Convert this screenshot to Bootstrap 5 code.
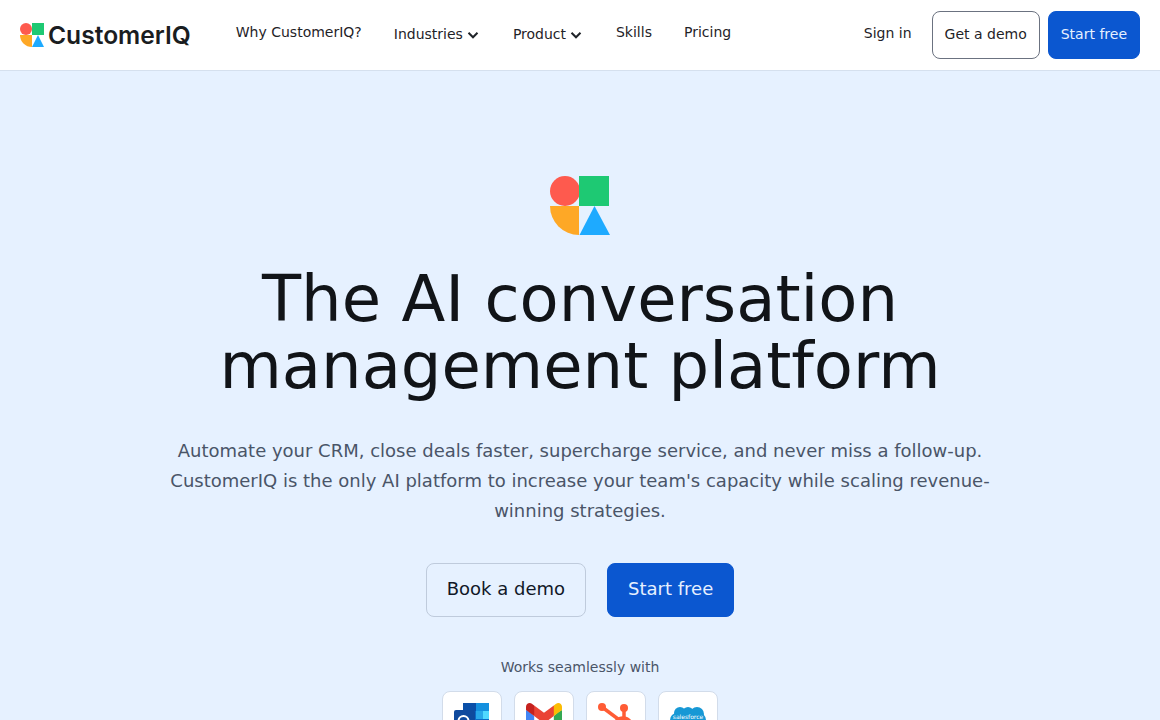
<!DOCTYPE html>
<html lang="en">
  <head>
    <meta charset="utf-8">
    <title>CustomerIQ</title>
    <link href="https://cdn.jsdelivr.net/npm/bootstrap@5.3.3/dist/css/bootstrap.min.css" rel="stylesheet">
    <style>
      html, body { height: 720px; overflow: hidden; }
      body { font-family: "DejaVu Sans", sans-serif; background: #e6f1ff; color: #111827; }
      .top-bar { height: 71px; background: #fff; border-bottom: 1px solid #d5e0ee; padding: 0 20px; }
      .brand-name { font-family: "Inter", sans-serif; font-weight: 600; font-size: 24.600px; color: #1a1d21; line-height: 1; }
      .main-links { margin-left: 29px; }
      .main-links a { display: block; padding: 0 16px; font-size: 14px; color: #1f2328; text-decoration: none; white-space: nowrap; margin-top: -5px; }
      .main-links a.has-menu { margin-top: -1px; }
      .main-links svg { margin-right: 1.500px; vertical-align: -2px; }
      .sign-link { font-size: 14px; color: #1f2328; text-decoration: none; margin-right: 12px; margin-top: -4px; }
      .nav-btn { font-size: 14px; height: 48px; border-radius: 8px; padding: 0 12px 2px; display: flex; align-items: center; }
      .btn-demo { background: #fff; color: #1f2328; border: 1px solid #6b7280; }
      .btn-free, .btn-free:hover { background: #0b57d0; color: #e6f0ff; border: 1px solid #0b57d0; }
      .hero { padding-top: 105px; }
      .hero h1 { font-size: 64px; font-weight: 400; line-height: 67px; color: #111418; margin: 30px 0 0; }
      .hero-copy { width: 830px; font-size: 18px; line-height: 30px; color: #4a5568; margin: 36px 0 0; }
      .hero-actions { gap: 21px; margin-top: 37px; }
      .hero-btn { font-size: 18px; height: 54px; border-radius: 8px; padding: 0 20px 3px; display: flex; align-items: center; }
      .btn-book { color: #111827; border: 1px solid #bfcbdc; background: transparent; }
      .works-label { font-size: 14px; color: #4a5568; margin: 40px 0 14px; line-height: 20px; }
      .tile-row { gap: 12px; }
      .logo-tile { width: 60px; height: 60px; background: #fff; border: 1px solid #d2dcea; border-radius: 8px; display: flex; align-items: flex-start; justify-content: center; padding-top: 11px; }
      .cloud-label { font-family: "DejaVu Sans", sans-serif; font-size: 6px; fill: #fff; }
    </style>
  </head>
  <body>
    <nav class="top-bar d-flex align-items-center">
      <a href="#" class="d-flex align-items-center gap-1 text-decoration-none">
        <svg width="24" height="24" viewBox="0 0 60 60"><circle cx="15" cy="15" r="15" fill="#fe5a4e"/><rect x="30" y="0" width="30" height="30" fill="#1ec973"/><path d="M0 30h30v30A30 30 0 0 1 0 30z" fill="#fea826"/><path d="M45 30 60 60H30z" fill="#1eaaff"/></svg>
        <span class="brand-name">CustomerIQ</span>
      </a>
      <div class="main-links d-flex align-items-center">
        <a href="#">Why CustomerIQ?</a>
        <a href="#" class="has-menu">Industries
          <svg width="12" height="12" viewBox="0 0 12 12"><path d="M1.500 3.800 6 8.300l4.500-4.500" fill="none" stroke="#1f2328" stroke-width="2"/></svg></a>
        <a href="#" class="has-menu">Product
          <svg width="12" height="12" viewBox="0 0 12 12"><path d="M1.500 3.800 6 8.300l4.500-4.500" fill="none" stroke="#1f2328" stroke-width="2"/></svg></a>
        <a href="#">Skills</a>
        <a href="#">Pricing</a>
      </div>
      <div class="ms-auto d-flex align-items-center gap-2">
        <a href="#" class="sign-link">Sign in</a>
        <a href="#" class="btn nav-btn btn-demo">Get a demo</a>
        <a href="#" class="btn nav-btn btn-free">Start free</a>
      </div>
    </nav>

    <main class="hero d-flex flex-column align-items-center text-center">
      <svg width="60" height="60" viewBox="0 0 60 60"><circle cx="15" cy="15" r="15" fill="#fe5a4e"/><rect x="29" y="0" width="30" height="30" fill="#1ec973"/><path d="M0 30h29v29A29 29 0 0 1 0 30z" fill="#fea826"/><path d="M44.500 30 60 59H29.500z" fill="#1eaaff"/></svg>
      <h1>The AI conversation<br>management platform</h1>
      <p class="hero-copy">Automate your CRM, close deals faster, supercharge service, and never miss a follow-up. CustomerIQ is the only AI platform to increase your team's capacity while scaling revenue-winning strategies.</p>
      <div class="hero-actions d-flex justify-content-center">
        <a href="#" class="btn hero-btn btn-book">Book a demo</a>
        <a href="#" class="btn hero-btn btn-free">Start free</a>
      </div>
      <div class="works-label">Works seamlessly with</div>
      <div class="tile-row d-flex justify-content-center">
        <div class="logo-tile">
          <svg width="36" height="36" viewBox="0 0 36 36"><rect x="9" y="0" width="26" height="30" fill="#0a6cc8"/><rect x="9" y="0" width="13" height="8" fill="#0a4fa8"/><rect x="22" y="0" width="13" height="8" fill="#1490df"/><rect x="22" y="8" width="7" height="8" fill="#28a8ea"/><rect x="29" y="8" width="6" height="8" fill="#50d9ff"/><rect x="0" y="7" width="21" height="22" rx="2" fill="#0f4a9e"/><circle cx="9.500" cy="18" r="5" fill="none" stroke="#fff" stroke-width="2"/></svg>
        </div>
        <div class="logo-tile">
          <svg width="36" height="36" viewBox="0 0 256 256" preserveAspectRatio="xMidYMin"><path d="M58.182 192.050V93.140L27.507 65.077 0 49.504v125.091c0 9.658 7.825 17.455 17.455 17.455h40.727Z" fill="#4285f4"/><path d="M197.818 192.050h40.727c9.659 0 17.455-7.826 17.455-17.455V49.505l-31.156 17.837-27.026 25.798v98.910Z" fill="#34a853"/><path d="M58.182 93.140l-4.174-38.647 4.174-36.989L128 69.868l69.818-52.364 4.670 34.992-4.670 40.644L128 145.504z" fill="#ea4335"/><path d="M197.818 17.504V93.140L256 49.504V26.231c0-21.585-24.640-33.890-41.890-20.945l-16.292 12.218Z" fill="#fbbc04"/><path d="M0 49.504l26.759 20.070L58.182 93.140V17.504L41.890 5.286C24.610-7.660 0 4.646 0 26.230v23.273Z" fill="#c5221f"/></svg>
        </div>
        <div class="logo-tile">
          <svg width="36" height="36" viewBox="0 0 36 36"><g stroke="#ff5c35" stroke-width="3.500" fill="none"><path d="M4 4 20 16"/><path d="M26 4v12"/></g><circle cx="4" cy="4" r="4" fill="#ff5c35"/><circle cx="26" cy="5" r="4" fill="#ff5c35"/><circle cx="25" cy="24" r="8.500" fill="none" stroke="#ff5c35" stroke-width="4.500"/></svg>
        </div>
        <div class="logo-tile">
          <svg width="38" height="36" viewBox="0 0 38 36"><g fill="#1798d5"><circle cx="11" cy="10" r="6"/><circle cx="19" cy="9.500" r="5.500"/><circle cx="28" cy="11" r="7"/><circle cx="8" cy="17" r="7"/><circle cx="19" cy="17" r="7"/><circle cx="30" cy="17" r="7"/></g><text class="cloud-label" x="19" y="16" text-anchor="middle">salesforce</text></svg>
        </div>
      </div>
    </main>
    <script src="https://cdn.jsdelivr.net/npm/bootstrap@5.3.3/dist/js/bootstrap.bundle.min.js"></script>
  </body>
</html>
